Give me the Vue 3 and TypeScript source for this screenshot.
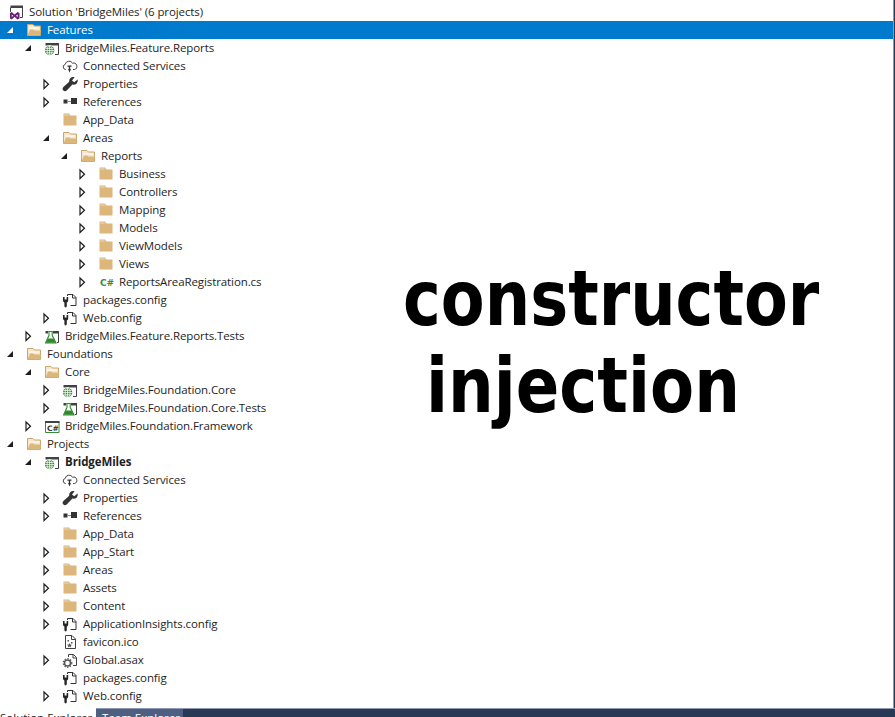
<script setup lang="ts">
type Toggle = 'open' | 'closed' | 'none'
interface Row {
  level: number
  toggle: Toggle
  icon: string
  label: string
  bold?: boolean
  selected?: boolean
}
const r = (level: number, toggle: Toggle, icon: string, label: string, extra: Partial<Row> = {}): Row => ({ level, toggle, icon, label, ...extra })

const rows: Row[] = [
  r(-1, 'none', 'solution', "Solution 'BridgeMiles' (6 projects)"),
  r(0, 'open', 'folderOpen', 'Features', { selected: true }),
  r(1, 'open', 'web', 'BridgeMiles.Feature.Reports'),
  r(2, 'none', 'cloud', 'Connected Services'),
  r(2, 'closed', 'wrench', 'Properties'),
  r(2, 'closed', 'refs', 'References'),
  r(2, 'none', 'folder', 'App_Data'),
  r(2, 'open', 'folderOpen', 'Areas'),
  r(3, 'open', 'folderOpen', 'Reports'),
  r(4, 'closed', 'folder', 'Business'),
  r(4, 'closed', 'folder', 'Controllers'),
  r(4, 'closed', 'folder', 'Mapping'),
  r(4, 'closed', 'folder', 'Models'),
  r(4, 'closed', 'folder', 'ViewModels'),
  r(4, 'closed', 'folder', 'Views'),
  r(4, 'closed', 'csfile', 'ReportsAreaRegistration.cs'),
  r(2, 'none', 'config', 'packages.config'),
  r(2, 'closed', 'config', 'Web.config'),
  r(1, 'closed', 'test', 'BridgeMiles.Feature.Reports.Tests'),
  r(0, 'open', 'folderOpen', 'Foundations'),
  r(1, 'open', 'folderOpen', 'Core'),
  r(2, 'closed', 'web', 'BridgeMiles.Foundation.Core'),
  r(2, 'closed', 'test', 'BridgeMiles.Foundation.Core.Tests'),
  r(1, 'closed', 'csproj', 'BridgeMiles.Foundation.Framework'),
  r(0, 'open', 'folderOpen', 'Projects'),
  r(1, 'open', 'web', 'BridgeMiles', { bold: true }),
  r(2, 'none', 'cloud', 'Connected Services'),
  r(2, 'closed', 'wrench', 'Properties'),
  r(2, 'closed', 'refs', 'References'),
  r(2, 'none', 'folder', 'App_Data'),
  r(2, 'closed', 'folder', 'App_Start'),
  r(2, 'closed', 'folder', 'Areas'),
  r(2, 'closed', 'folder', 'Assets'),
  r(2, 'closed', 'folder', 'Content'),
  r(2, 'closed', 'config', 'ApplicationInsights.config'),
  r(2, 'none', 'ico', 'favicon.ico'),
  r(2, 'closed', 'asax', 'Global.asax'),
  r(2, 'none', 'config', 'packages.config'),
  r(2, 'closed', 'config', 'Web.config'),
]

const indent = (row: Row) => ({ paddingLeft: `${row.level < 0 ? 8 : row.level * 18 + 1}px` })
</script>

<template>
  <div class="page">
    <main class="main">
      <ul class="tree">
        <li v-for="(row, i) in rows" :key="i" class="row" :class="{ selected: row.selected, bold: row.bold }" :style="indent(row)">
          <span v-if="row.level >= 0" class="toggle">
            <svg v-if="row.toggle === 'open'" width="18" height="18" viewBox="0 0 18 18">
              <path d="M12 6 L12 12 L6 12 Z" :fill="row.selected ? '#fff' : '#1e1e1e'" />
            </svg>
            <svg v-else-if="row.toggle === 'closed'" width="18" height="18" viewBox="0 0 18 18">
              <path d="M7 5 L11.5 9.2 L7 13.5 Z" fill="#fff" stroke="#1e1e1e" stroke-width="1.2" />
            </svg>
          </span>
          <svg class="icon" width="16" height="16" viewBox="0 0 16 16">
            <template v-if="row.icon === 'solution'">
              <path d="M4 3 H14.5 V13.5 H12" fill="none" stroke="#424242" stroke-width="1" />
              <path d="M2.5 1.5 H15 V4 H2.5 Z" fill="#424242" />
              <path d="M2.5 3.5 V8" stroke="#424242" stroke-width="1" />
              <path d="M2 9 L3.8 8 L6.5 10.6 L9.5 8 L11.5 9 V14.5 L9.5 15.5 L6.5 12.8 L3.8 15.5 L2 14.5 Z" fill="#68217a" />
              <path d="M3.8 10.4 L5.2 11.7 L3.8 13 Z M8 11.7 L9.6 10.4 V13 Z" fill="#fff" />
            </template>
            <template v-else-if="row.icon === 'folder'">
              <path d="M1.5 1.5 H7 L8.5 3.5 H14.5 V13.5 H1.5 Z" fill="#dcb67a" />
              <path d="M2 3.6 H7.4 L6.4 2.4 H2 Z" fill="#ecd9b8" />
            </template>
            <template v-else-if="row.icon === 'folderOpen'">
              <path d="M1.5 2.5 H7 L8.5 4 H14.5 V13.5 H1.5 Z" fill="#f5e6cd" stroke="#c9a66b" stroke-width="1" />
              <path d="M1.5 13.5 L4 7.5 H7 L8.5 8.5 H15.2 L13.5 13.5 Z" fill="#dcb67a" />
              <path d="M3 6 H13" stroke="#fff" stroke-width="1" />
            </template>
            <template v-else-if="row.icon === 'web'">
              <path d="M3 3.5 H14.5 V14.5 H11" fill="none" stroke="#424242" stroke-width="1" />
              <path d="M1.5 3 H15 V5.5 H1.5 Z" fill="#424242" />
              <circle cx="5.6" cy="10.6" r="5.4" fill="#fff" />
              <circle cx="5.6" cy="10.6" r="4.6" fill="#2f8a2c" />
              <path d="M1 10.6 H10.2 M5.6 6 V15.2 M1.8 8.4 H9.4 M1.8 12.8 H9.4" fill="none" stroke="#fff" stroke-width="0.8" />
              <ellipse cx="5.6" cy="10.6" rx="2.4" ry="4.6" fill="none" stroke="#fff" stroke-width="0.7" />
            </template>
            <template v-else-if="row.icon === 'test'">
              <path d="M3 3.5 H14.5 V14.5 H12.5" fill="none" stroke="#424242" stroke-width="1" />
              <path d="M1.5 3 H15 V5.5 H1.5 Z" fill="#424242" />
              <path d="M4 2.5 H9 V7 L13 14.5 V15.5 H0.5 V14.5 L4 7 Z" fill="#fff" />
              <path d="M4.2 3.5 H8.8 M5 3.5 V7.3 L1.6 15 H12 L8.2 7.3 V3.5" fill="none" stroke="#2f8a2c" stroke-width="1.1" />
              <path d="M3.8 10.5 H9.4 L11.6 14.8 H2 Z" fill="#2f8a2c" />
            </template>
            <template v-else-if="row.icon === 'csproj'">
              <path d="M1.5 3.5 H15 V14.5 H1.5 Z" fill="#fff" stroke="#388a34" stroke-width="1" />
              <path d="M1 3 H15.5 V5 H1 Z" fill="#424242" />
              <text x="3" y="12.6" class="cs-dark">C#</text>
            </template>
            <template v-else-if="row.icon === 'csfile'">
              <text x="2" y="11.5" class="cs-green">C#</text>
            </template>
            <template v-else-if="row.icon === 'cloud'">
              <path d="M4 11.5 H3.5 A2.6 2.6 0 0 1 3.2 6.4 A4 4 0 0 1 10.6 5.2 A3.2 3.2 0 0 1 12.5 11.5 H11" fill="none" stroke="#424242" stroke-width="1" />
              <path d="M5.5 7.5 H9.5 V8.7 H8.2 V11 H9 L7.5 14.5 L6 11 H6.8 V8.7 H5.5 Z" fill="#333" />
            </template>
            <template v-else-if="row.icon === 'wrench'">
              <path d="M15.6 3.6 L12.2 6.2 L10 4.4 L12.6 1.2 C9.4 0.2 6.8 2.4 7.2 5.8 L1.4 11 C0.2 12.2 0.4 13.8 1.4 14.6 C2.4 15.5 3.8 15.4 5 14.2 L10.4 8.6 C13.6 9.4 16.4 6.8 15.6 3.6 Z" fill="#333" />
            </template>
            <template v-else-if="row.icon === 'refs'">
              <path d="M1.5 5.5 H5.5 V9.5 H1.5 Z" fill="#333" />
              <path d="M5.5 7.5 H9" stroke="#8a8a8a" stroke-width="1" />
              <path d="M9 4 H15 V10 H9 Z" fill="#333" />
            </template>
            <template v-else-if="row.icon === 'config'">
              <path d="M5.5 4 V2.5 H11 L14 5.5 V13.5 H8.5" fill="#fff" stroke="#333" stroke-width="1" />
              <path d="M10.5 2.5 V6 H14" fill="none" stroke="#333" stroke-width="1" />
              <path d="M1 5 H2.6 V7.6 H4.6 V5 H6.2 V8.4 Q6.2 10 4.8 10.4 V14 Q4.8 15.4 3.6 15.4 Q2.4 15.4 2.4 14 V10.4 Q1 10 1 8.4 Z" fill="#262626" />
            </template>
            <template v-else-if="row.icon === 'ico'">
              <path d="M3.5 1.5 H10 L13.5 5 V14.5 H3.5 Z" fill="#fff" stroke="#424242" stroke-width="1" />
              <path d="M9.5 1.5 V5.5 H13.5" fill="none" stroke="#424242" stroke-width="1" />
              <path d="M5.5 6 H7 V7.5 H5.5 Z M9 8 H10.5 V9.5 H9 Z" fill="#555" />
              <path d="M7.5 9 L8.2 10.6 L10 10.8 L8.7 11.9 L9.1 13.4 L7.5 12.6 L5.9 13.4 L6.3 11.9 L5 10.8 L6.8 10.6 Z" fill="#555" />
            </template>
            <template v-else-if="row.icon === 'asax'">
              <path d="M6.5 5 V2.5 H11.5 L14.5 5.5 V13.5 H11" fill="#fff" stroke="#424242" stroke-width="1" />
              <path d="M11 2.5 V6 H14.5" fill="none" stroke="#424242" stroke-width="1" />
              <circle cx="5.5" cy="11" r="3" fill="none" stroke="#555" stroke-width="1.5" />
              <circle cx="5.5" cy="11" r="4.3" fill="none" stroke="#555" stroke-width="1.2" stroke-dasharray="1.4 1.4" />
            </template>
          </svg>
          <span class="label">{{ row.label }}</span>
        </li>
      </ul>
      <div class="caption">
        <div class="line-one">constructor</div>
        <div class="line-two">injection</div>
      </div>
    </main>
    <footer class="tabs">
      <span class="tab active">Solution Explorer</span>
      <span class="tab team">Team Explorer</span>
      <span class="rest"></span>
    </footer>
  </div>
</template>

<style>
html, body { margin: 0; background: #fff; }
</style>

<style scoped>
.page {
  width: 895px;
  height: 717px;
  display: flex;
  flex-direction: column;
  overflow: hidden;
  background: #293955;
  font-family: "Open Sans", "Noto Sans", sans-serif;
  color: #1e1e1e;
}
.main {
  flex: 1;
  min-height: 0;
  display: flex;
  overflow: hidden;
  background: #fff;
  margin-right: 1px;
  border-right: 1px solid #8e9ab5;
}
.tree {
  flex: 1;
  min-width: 0;
  list-style: none;
  margin: 0;
  padding: 3px 0 0;
}
.row {
  height: 18px;
  display: flex;
  align-items: center;
  font-size: 11.5px;
  line-height: 18px;
  letter-spacing: -0.1px;
  white-space: nowrap;
}
.row.selected {
  background: #007acc;
  color: #fff;
  margin-right: -495px;
}
.row.bold { font-weight: 700; }
.toggle {
  flex: none;
  width: 18px;
  height: 18px;
  margin-right: 7px;
}
.toggle svg { display: block; }
.icon { flex: none; display: block; }
.label { margin-left: 5px; }
.cs-green {
  font: 700 9px "DejaVu Sans", sans-serif;
  fill: #388a34;
}
.cs-dark {
  font: 700 7.5px "DejaVu Sans", sans-serif;
  fill: #333;
}
.caption {
  flex: 0 0 495px;
  min-width: 0;
  padding-top: 255px;
  font-family: "DejaVu Sans", sans-serif;
  font-weight: 700;
  font-size: 76px;
  line-height: 87px;
  color: #000;
  white-space: nowrap;
}
.line-one, .line-two {
  transform-origin: left center;
}
.line-one { margin-left: 5px; transform: scaleX(0.84); }
.line-two { margin-left: 28px; transform: scaleX(0.845); }
.tabs {
  flex: 0 0 9px;
  display: flex;
  overflow: hidden;
  font-size: 11.5px;
  line-height: 18px;
  white-space: nowrap;
}
.tab {
  height: 19px;
  display: block;
  box-sizing: border-box;
  flex: none;
}
.tab.active {
  width: 96px;
  padding-top: 1px;
  background: #fff;
  color: #1e1e1e;
}
.tab.team {
  width: 87px;
  border-top: 1px solid #8e9ab5;
  background: #4d6082;
  color: #fff;
  padding-left: 6px;
}
.rest {
  flex: 1;
  border-top: 1px solid #8e9ab5;
}
</style>
